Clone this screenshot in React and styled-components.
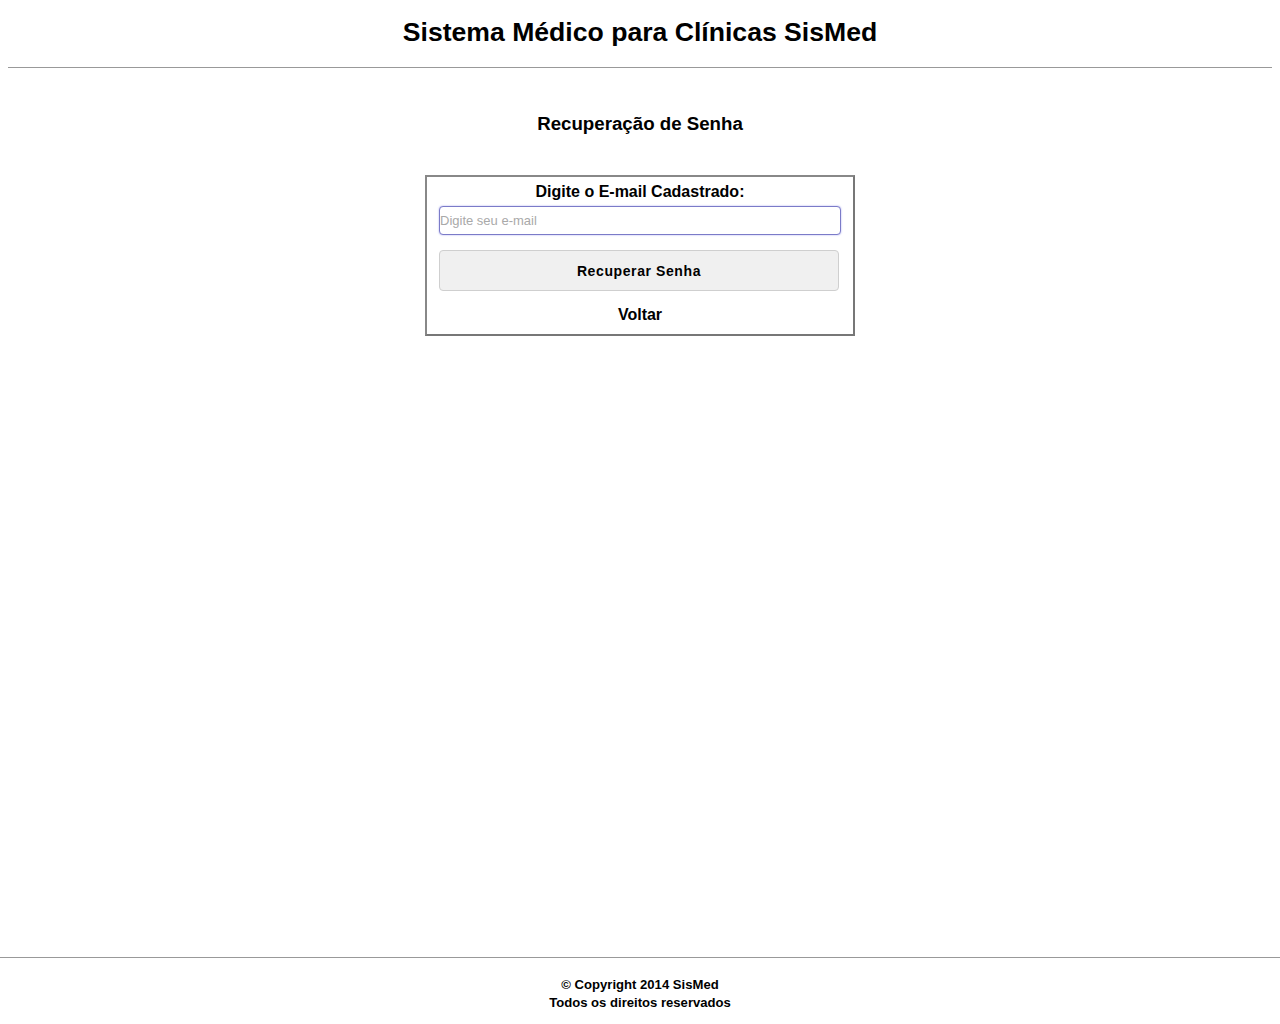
import React from "react";
import styled, { createGlobalStyle } from "styled-components";

const GlobalStyle = createGlobalStyle`
  html, body {
    margin: 0;
    padding: 0;
    background: #fff;
    font-family: "Liberation Sans", Arial, sans-serif;
    color: #000;
  }
`;

const Page = styled.div`
  min-height: 100vh;
  display: flex;
  flex-direction: column;
`;

const Header = styled.header`
  margin: 0 8px;
  padding-top: 16px;
  border-bottom: 1px solid #999;
  padding-bottom: 19px;
  h1 {
    margin: 0;
    text-align: center;
    font-size: 26.6px;
    line-height: 32px;
    font-weight: bold;
  }
`;

const Main = styled.main`
  flex: 1;
  display: flex;
  flex-direction: column;
  align-items: center;
  padding-top: 44px;
`;

const Subtitle = styled.h2`
  margin: 0 0 39px;
  font-size: 18.7px;
  line-height: 24px;
  font-weight: bold;
`;

const Box = styled.form`
  width: 402px;
  border: 2px solid;
  border-color: #888 #777 #777 #888;
  display: flex;
  flex-direction: column;
  align-items: center;
  padding: 5px 12px 9px;
`;

const Label = styled.label`
  font-size: 16px;
  font-weight: bold;
  line-height: 20px;
  margin-bottom: 4px;
`;

const Input = styled.input`
  box-sizing: border-box;
  width: 402px;
  height: 29px;
  border: 1px solid #7b7bc8;
  border-radius: 4px;
  box-shadow: 0 0 2px #a8a8ee;
  padding: 0;
  font-family: "Liberation Sans", Arial, sans-serif;
  font-size: 13px;
  outline: none;
  &::placeholder {
    color: #a9a9a9;
  }
`;

const Button = styled.button`
  box-sizing: border-box;
  width: 400px;
  height: 41px;
  margin-top: 15px;
  margin-right: 2px;
  background: #f0f0f0;
  border: 1px solid #cfcfcf;
  border-radius: 4px;
  font-family: "Liberation Sans", Arial, sans-serif;
  font-size: 14px;
  font-weight: bold;
  letter-spacing: 0.6px;
  color: #000;
`;

const BackLink = styled.a`
  margin-top: 14px;
  font-size: 16px;
  font-weight: bold;
  line-height: 20px;
  color: #000;
  text-decoration: none;
`;

const Footer = styled.footer`
  border-top: 1px solid #999;
  padding: 18px 0 12px;
  text-align: center;
  font-size: 13.1px;
  font-weight: bold;
  line-height: 18px;
`;

export default function App() {
  return (
    <Page>
      <GlobalStyle />
      <Header>
        <h1>Sistema Médico para Clínicas SisMed</h1>
      </Header>
      <Main>
        <Subtitle>Recuperação de Senha</Subtitle>
        <Box onSubmit={(e) => e.preventDefault()}>
          <Label htmlFor="email">Digite o E-mail Cadastrado:</Label>
          <Input id="email" type="email" placeholder="Digite seu e-mail" />
          <Button type="submit">Recuperar Senha</Button>
          <BackLink href="#">Voltar</BackLink>
        </Box>
      </Main>
      <Footer>
        <div>© Copyright 2014 SisMed</div>
        <div>Todos os direitos reservados</div>
      </Footer>
    </Page>
  );
}
